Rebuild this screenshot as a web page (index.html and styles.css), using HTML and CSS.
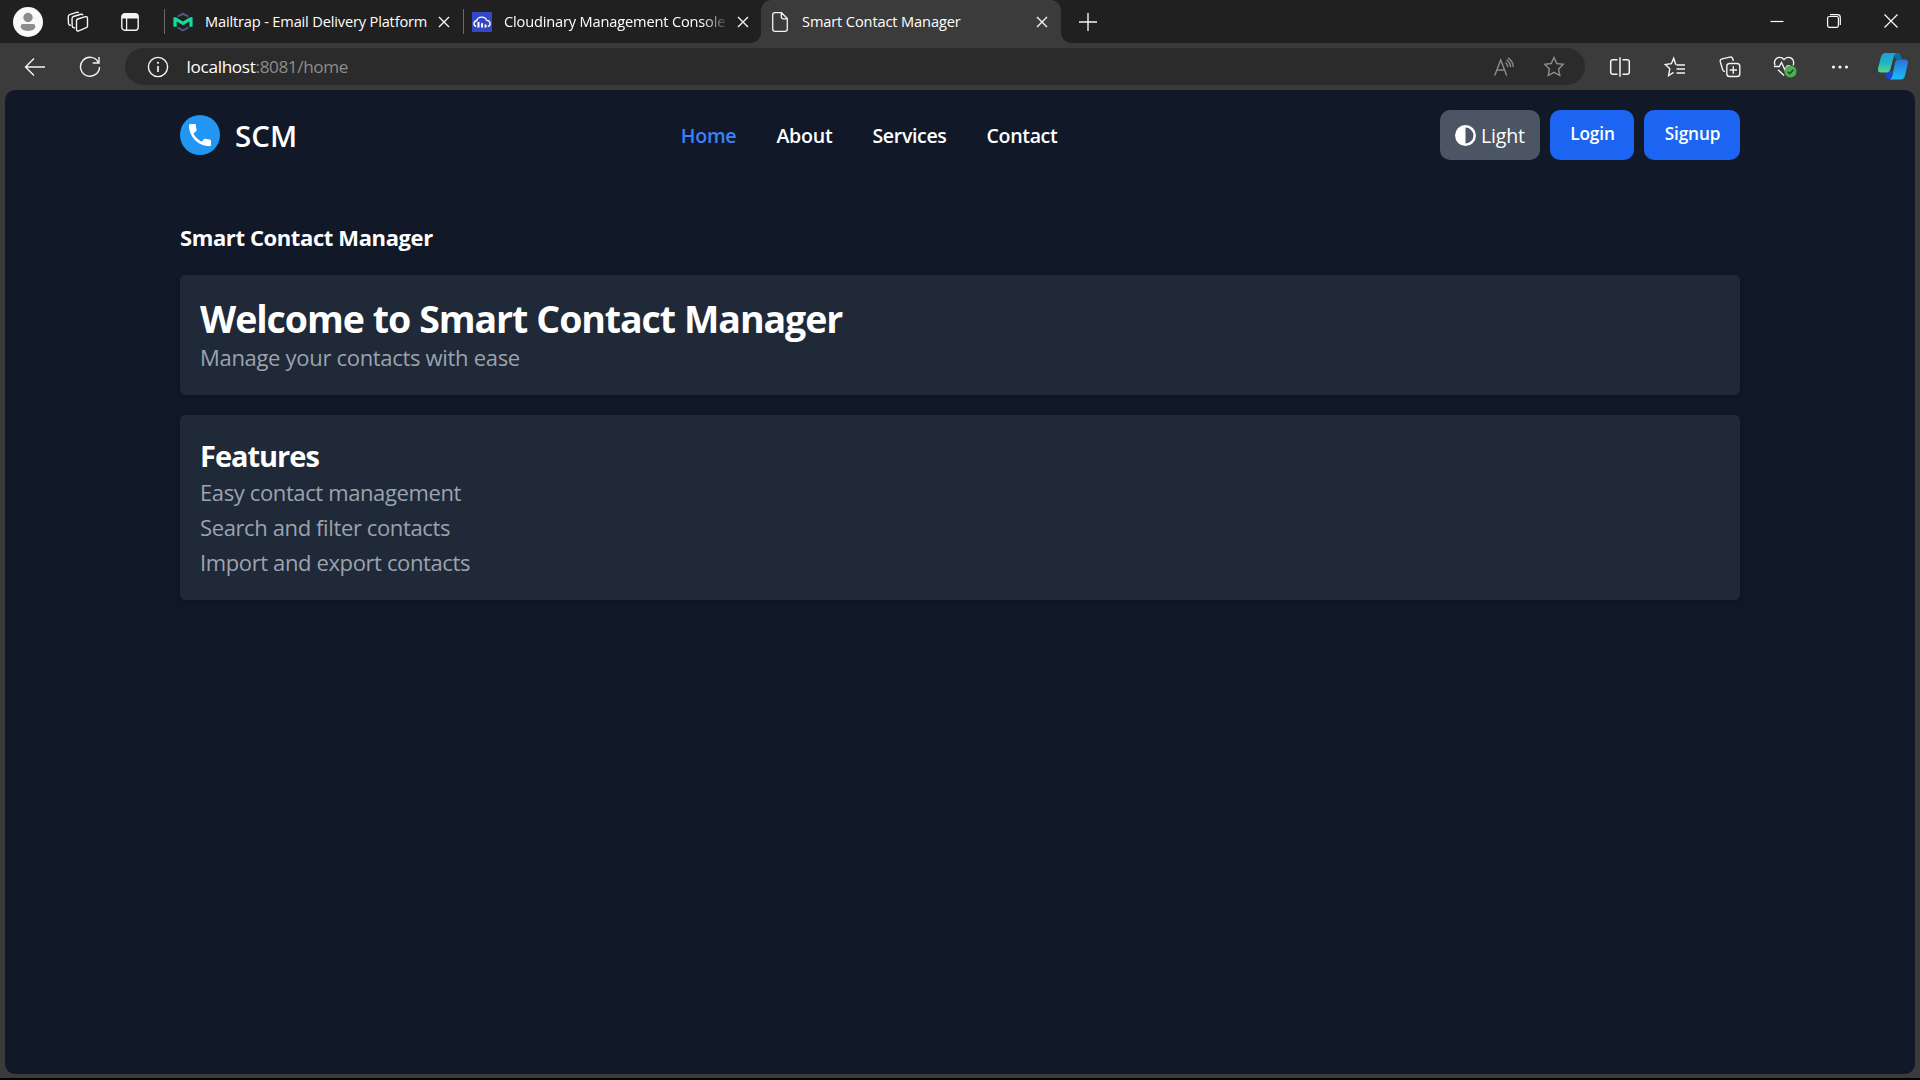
FILE: index.html
```html
<!DOCTYPE html>
<html lang="en">
<head>
<meta charset="utf-8">
<title>Smart Contact Manager</title>
<link rel="stylesheet" href="styles.css">
</head>
<body>
<div class="window">
  <div class="tabbar">
    <svg class="avatar" width="30" height="30" viewBox="0 0 30 30"><circle cx="15" cy="15" r="15" fill="#f9f9f9"/><circle cx="15" cy="10.500" r="4.700" fill="#8c8c8c"/><path d="M10 17h10a2.300 2.300 0 0 1 2.300 2.300c0 2.800-3 4.700-7.300 4.700s-7.300-1.900-7.300-4.700A2.300 2.300 0 0 1 10 17z" fill="#8c8c8c"/></svg>
    <svg class="workspaces line" width="22" height="22" viewBox="0 0 22 22"><path d="M9.500 9.500q.2-1 1.200-1.500l7.800-2.300q2-.4 2 1.300v8q0 1.300-1.200 1.700l-7.600 3.100q-2 .6-2.200-1.200z"/><path d="M8.200 16.800q-2.700.4-3-1.600L5 7.800q.1-1.800 1.500-2.300l7.500-2.200q1.600-.4 2 1"/><path d="M4 14.300q-2.200.2-2.500-1.700L1.200 5.900q0-1.700 1.500-2.200L9.500 1.400q1.500-.5 2.200.6"/></svg>
    <svg class="tab-actions" width="18" height="18" viewBox="0 0 18 18"><rect x=".8" y=".8" width="16.400" height="16.400" rx="3" fill="none" stroke="#f4f4f4" stroke-width="1.400"/><path d="M1 5.500V3q0-2 2-2h12q2 0 2 2v2.500z" fill="#f4f4f4"/><path d="M5.600 5v12" stroke="#f4f4f4" stroke-width="1.300"/></svg>
    <div class="tab tab-first">
      <svg class="favicon" width="20" height="20" viewBox="0 0 20 20"><path d="M4.500 3.600 10 .4l5.500 3.200v2L10 3 4.500 5.600zM4.500 16.400 10 19.600l5.500-3.200v-1.800L10 17.200l-5.500-2.600z" fill="#4c5b7c"/><path d="M.4 5.200h2.400L10 9.600l7.200-4.400h2.400v9.600h-3.200V9.400L10 13.200 3.600 9.400v5.400H.4z" fill="#11dd9c"/></svg>
      <span class="title">Mailtrap - Email Delivery Platform</span>
      <svg class="close" width="12" height="12" viewBox="0 0 12 12"><path d="m1 1 10 10M11 1 1 11"/></svg>
    </div>
    <div class="tab tab-second">
      <svg class="favicon" width="20" height="20" viewBox="0 0 20 20"><path d="M0 0h20v20H0z" fill="#3448c5"/><path d="M4.300 14.600C.9 13.500 1.500 9 4.700 8.700 6 4.300 12.800 3.700 14.800 8.400c4 .2 4.300 5.200 1 6.200" fill="none" stroke="#fff" stroke-width="1.400"/><path d="M5.500 10h2v5.500h-2zM9 11.300h2v4.200H9zM12.500 12.500h2v3h-2z" fill="#fff"/></svg>
      <span class="title fade">Cloudinary Management Console</span>
      <svg class="close" width="12" height="12" viewBox="0 0 12 12"><path d="m1 1 10 10M11 1 1 11"/></svg>
    </div>
    <div class="tab tab-active">
      <svg class="favicon" width="16" height="20" viewBox="0 0 16 20"><path d="M3 .7h6.500l5.800 5.800V17q0 2.300-2.300 2.300H3Q.7 19.300.7 17V3Q.7.7 3 .7zM9.300 1v4q0 1.800 1.800 1.800H15" fill="none" stroke="#f4f4f4" stroke-width="1.300"/></svg>
      <span class="title">Smart Contact Manager</span>
      <svg class="close" width="12" height="12" viewBox="0 0 12 12"><path d="m1 1 10 10M11 1 1 11"/></svg>
    </div>
    <svg class="new-tab line" width="18" height="18" viewBox="0 0 18 18"><path d="M9 0v18M0 9h18"/></svg>
    <div class="controls">
      <svg width="14" height="14" viewBox="0 0 14 14"><path d="M.5 7.500h13"/></svg>
      <svg width="14" height="14" viewBox="0 0 14 14"><rect x=".6" y="2.500" width="10.800" height="10.900" rx="1.800"/><path d="M3 .6h7.500q2.800 0 2.800 2.800V11"/></svg>
      <svg width="14" height="14" viewBox="0 0 14 14"><path d="m.5.500 13 13M13.500.5l-13 13"/></svg>
    </div>
  </div>

  <div class="toolbar">
    <svg class="back line" width="22" height="20" viewBox="0 0 22 20"><path d="M10 1.500 1.500 10l8.500 8.500M1.500 10H21"/></svg>
    <svg class="reload line" width="22" height="22" viewBox="0 0 22 22"><path d="M19.500 6.500A9.500 9.500 0 1 0 20.500 11M20 1v6h-6.300"/></svg>
    <div class="address">
      <svg class="info line" width="22" height="22" viewBox="0 0 22 22"><circle cx="11" cy="11" r="9.600"/><path d="M11 10v6" stroke-width="1.700"/><circle cx="11" cy="6.800" r="1.100" fill="#f4f4f4" stroke="none"/></svg>
      <span class="url"><span class="host">localhost</span><span class="path">:8081/home</span></span>
      <svg class="read" width="20" height="20" viewBox="0 0 20 20"><path d="M.7 18.500 6.700 3l6 15.500M2.900 13h7.700M11.500 5.500q2.200 1.700 2.200 4.600M12.500 2.800q4 2.600 4 7.300M14 .8q5.200 3.200 5.200 9.300"/></svg>
      <svg class="star" width="22" height="22" viewBox="0 0 22 22"><path d="m11 1.500 2.800 6 6.500.8-4.700 4.600 1.200 6.600-5.800-3.200-5.800 3.200 1.200-6.600-4.700-4.600 6.500-.8z"/></svg>
    </div>
    <div class="actions">
      <span><svg width="22" height="22" viewBox="0 0 22 22"><path d="M8.500 3.800H4Q1.700 3.800 1.700 6v10q0 2.300 2.300 2.300h4.500M13.500 3.800H18q2.300 0 2.300 2.200v10q0 2.300-2.300 2.300h-4.500M11 1.300v19.400" stroke-width="1.500"/></svg></span>
      <span><svg width="22" height="22" viewBox="0 0 22 22"><path d="M12.300 8.300h-.6L9.700 2.200 7.400 7.700l-6.100.8 4.500 4.300-1.200 6.700 5-3.200M12.500 9h8.500M12.500 13h8.500M12.500 17h8.500"/></svg></span>
      <span><svg width="22" height="22" viewBox="0 0 22 22"><path d="M6 15.500q-1.900 0-2.400-1.900L1.300 5.700Q.8 3.500 3 2.900l7.800-1.800q2.200-.5 2.900 1.600l.7 2.300"/><rect x="7.800" y="7.500" width="13" height="13" rx="2.800"/><path d="M14.300 10.300v7.400M10.600 14h7.400"/></svg></span>
      <span><svg width="24" height="24" viewBox="0 0 24 24"><path d="M2 10.300C.7 7.300 2 2.600 6.300 2.400 8.600 2.300 10.200 3.500 11 4.600c.9-1.300 2.800-2.300 4.700-2.200 4.300.2 5.700 4.200 4.500 8M1 11.500h5.300l2.200-4 3.400 7.200 2.300-3.800h3M5 14.800l6 5.600"/><circle cx="17.500" cy="16.500" r="6" fill="#4caf50" stroke="none"/><path d="m14.700 16.700 2 2 3.700-4" stroke="#24472a"/></svg></span>
      <span><svg width="20" height="20" viewBox="0 0 20 20"><g fill="#f4f4f4" stroke="none"><circle cx="3.500" cy="10" r="1.600"/><circle cx="10" cy="10" r="1.600"/><circle cx="16.500" cy="10" r="1.600"/></g></svg></span>
    </div>
    <svg class="copilot" width="32" height="28" viewBox="0 0 32 28">
      <defs>
        <linearGradient id="ribbon-green" x1="0" y1="0" x2="0" y2="1"><stop offset="0" stop-color="#1d9fe0"/><stop offset=".5" stop-color="#1fb5c3"/><stop offset="1" stop-color="#57d78e"/></linearGradient>
        <linearGradient id="ribbon-blue" x1="0" y1="0" x2="0" y2="1"><stop offset="0" stop-color="#2a74dd"/><stop offset="1" stop-color="#18bdfb"/></linearGradient>
      </defs>
      <path d="M16 1h5q2 0 2.700 2l1.300 4.500h-6z" fill="#0b6f9e"/>
      <path d="M8 19h8l-2 8h-2q-2.200 0-3-2.500z" fill="#1747d4"/>
      <path d="M8.500 1H19q-1.500.8-2.300 4l-3.300 12q-.9 3.500-4.400 3.500H4q-3.800 0-2.900-4.500l2.700-10.500Q5 1 8.500 1z" fill="url(#ribbon-green)"/>
      <path d="M22 7.500h5.500q4.200 0 3.300 4.200L28.200 23q-1.200 4.500-4.700 4.500H13q1.500-.8 2.400-4L18 11q.8-3.500 4-3.500z" fill="url(#ribbon-blue)"/>
    </svg>
  </div>

  <div class="viewport">
    <header class="navbar">
      <div class="brand">
        <svg width="40" height="40" viewBox="0 0 40 40"><circle cx="20" cy="20" r="20" fill="#2196f3"/><path d="M13.400 18.600c1.800 3.500 4.700 6.300 8.100 8.100l2.700-2.700c.3-.3.8-.4 1.200-.3 1.400.5 2.900.7 4.300.7.700 0 1.300.6 1.300 1.300v4.300c0 .7-.6 1.200-1.300 1.200C18.200 31.200 9 22 9 10.300 9 9.600 9.600 9 10.200 9h4.500c.7 0 1.200.6 1.200 1.300 0 1.600.3 3 .7 4.400.1.400 0 .9-.3 1.200z" fill="#fff"/></svg>
        <span class="brand-name">SCM</span>
      </div>
      <nav class="links">
        <a class="current">Home</a><a>About</a><a class="wide">Services</a><a class="wide">Contact</a>
      </nav>
      <div class="buttons">
        <button class="theme"><svg width="21" height="21" viewBox="0 0 21 21"><circle cx="10.500" cy="10.500" r="9.200" fill="none" stroke="#fff" stroke-width="2.500"/><path d="M10.500 1v19a9.500 9.500 0 0 1 0-19z" fill="#fff"/></svg><span>Light</span></button>
        <button class="primary login">Login</button>
        <button class="primary signup">Signup</button>
      </div>
    </header>
    <main>
      <h3>Smart Contact Manager</h3>
      <section class="card">
        <h1>Welcome to Smart Contact Manager</h1>
        <p>Manage your contacts with ease</p>
      </section>
      <section class="card">
        <h2>Features</h2>
        <ul>
          <li>Easy contact management</li>
          <li>Search and filter contacts</li>
          <li>Import and export contacts</li>
        </ul>
      </section>
    </main>
  </div>
</div>
</body>
</html>
```
FILE: styles.css
```css
* { box-sizing: border-box; }
body { margin: 0; background: #000; color: #fff; font-family: "Open Sans", "Noto Sans", sans-serif; }
svg { display: block; flex: none; }
h1, h2, h3, p, ul { margin: 0; padding: 0; list-style: none; }
span, a { white-space: nowrap; }

.window { width: 1920px; height: 1078px; background: #3b3b3b; display: flex; flex-direction: column; }
.line { fill: none; stroke: #f4f4f4; stroke-width: 1.4; }

/* Tab strip */
.tabbar { height: 43px; background: #202020; display: flex; align-items: center; }
.avatar { margin-left: 13px; }
.workspaces { margin-left: 24px; }
.tab-actions { margin-left: 32px; }
.tab { height: 43px; display: flex; align-items: center; font-size: 14.6px; line-height: 20px; letter-spacing: -0.12px; }
.tab::before { content: ""; width: 1px; height: 25px; background: #696969; }
.tab-first { width: 299px; margin-left: 25px; }
.tab-second { width: 298px; }
.tab .favicon { margin: 1px 0 0 8px; }
.tab .title { margin: 0 0 2px 12px; width: 223px; }
.tab-first .title { letter-spacing: -0.16px; }
.tab .fade { -webkit-mask-image: linear-gradient(90deg, #000 89%, transparent 101%); mask-image: linear-gradient(90deg, #000 89%, transparent 101%); letter-spacing: -0.16px; }
.close { margin: 1px 0 0 10px; fill: none; stroke: #f4f4f4; stroke-width: 1.4; }
.tab-active {
  width: 320px;
  margin: 0 -10px;
  padding-left: 10px;
  background:
    radial-gradient(circle at 0 0, transparent 9.5px, #3b3b3b 10px) 0 100% / 10px 10px no-repeat,
    radial-gradient(circle at 100% 0, transparent 9.5px, #3b3b3b 10px) 100% 100% / 10px 10px no-repeat,
    radial-gradient(circle at 100% 100%, #3b3b3b 9.5px, transparent 10px) 10px 0 / 10px 10px no-repeat,
    radial-gradient(circle at 0 100%, #3b3b3b 9.5px, transparent 10px) calc(100% - 10px) 0 / 10px 10px no-repeat,
    linear-gradient(#3b3b3b, #3b3b3b) 10px 10px / calc(100% - 20px) 33px no-repeat,
    linear-gradient(#3b3b3b, #3b3b3b) 20px 0 / calc(100% - 40px) 10px no-repeat;
}
.tab-active::before { display: none; }
.tab-active .favicon { margin-left: 11px; }
.tab-active .title { margin-left: 14px; }
.tab-active .close { margin-left: 11px; }
.new-tab { margin-left: 18px; }
.controls { margin: 0 22px 1px auto; display: flex; gap: 43px; }
.controls svg { fill: none; stroke: #fff; stroke-width: 1.2; }

/* Address bar */
.toolbar { height: 47px; display: flex; align-items: center; }
.back { margin-left: 24px; }
.reload { margin-left: 33px; }
.address { margin-left: 24px; width: 1460px; height: 37px; border-radius: 19px; background: #2b2b2b; display: flex; align-items: center; }
.info { margin-left: 21.5px; }
.url { margin-left: 18px; font-size: 17.2px; line-height: 24px; }
.host { letter-spacing: -0.33px; }
.path { color: #8d8d8d; letter-spacing: -0.42px; }
.read, .star { fill: none; stroke: #8d8d8d; stroke-width: 1.4; }
.read { margin-left: auto; }
.star { margin: 0 20px 0 29px; }
.actions { margin-left: 7px; display: flex; }
.actions span { width: 55.2px; display: flex; justify-content: center; align-items: center; }
.actions svg { fill: none; stroke: #f4f4f4; stroke-width: 1.4; }
.copilot { margin: 0 0 2px 9px; }

/* Page */
.viewport { width: 1910px; height: 984px; margin-left: 5px; background: #111827; border-radius: 10px; }
.navbar { height: 90px; margin: 0 175px; display: flex; justify-content: space-between; align-items: center; }
.brand { display: flex; align-items: center; gap: 15px; }
.brand-name { padding: 2px 1px 0 0; font-size: 29.5px; line-height: 40px; font-weight: 600; letter-spacing: 0; }
.links { display: flex; gap: 40px; padding-top: 2px; font-size: 19.6px; font-weight: 600; line-height: 30px; letter-spacing: -0.25px; }
.links .wide { letter-spacing: -0.37px; }
.links .current { color: #3b82f6; }
.buttons { display: flex; gap: 10px; justify-content: flex-end; }
button { height: 50px; border: 0; border-radius: 10px; padding: 0; color: #fff; font-family: inherit; display: flex; align-items: center; }
.theme { width: 100px; background: #4b5563; font-size: 19.6px; letter-spacing: -0.2px; padding: 1px 0 0 15px; gap: 5px; }
.primary { background: #1c64f2; font-size: 17.2px; font-weight: 600; letter-spacing: -0.15px; justify-content: center; padding: 0 0 3px 1px; }
.login { width: 84px; }
.signup { width: 96px; }

main { margin: 0 175px; padding-top: 40px; }
h3 { font-size: 22px; line-height: 35px; letter-spacing: -0.39px; margin-bottom: 20px; }
.card { background: #1f2937; border-radius: 5px; padding: 20px; margin-bottom: 20px; box-shadow: 0 2px 5px rgba(0, 0, 0, .2); }
h1 { font-size: 37.5px; line-height: 43px; padding-top: 2px; letter-spacing: -1.08px; word-spacing: 0.4px; }
h2 { font-size: 29px; line-height: 38px; padding-top: 2px; letter-spacing: -1.02px; }
p, li { font-size: 22px; line-height: 35px; letter-spacing: -0.38px; color: #9ca3af; }
p { letter-spacing: -0.31px; }
```
